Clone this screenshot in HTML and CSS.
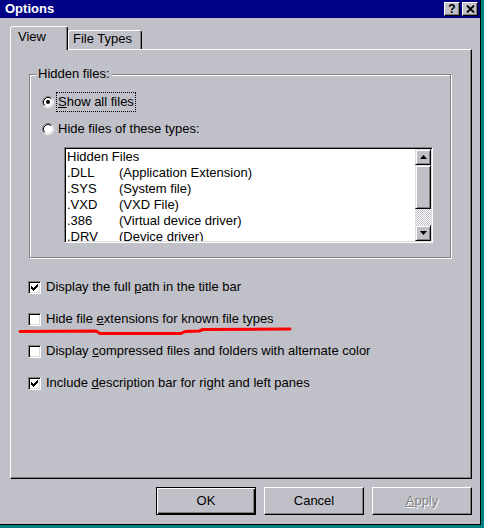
FILE: index.html
```html
<!DOCTYPE html>
<html>
<head>
<meta charset="utf-8">
<title>Options</title>
<link rel="stylesheet" href="styles.css">
</head>
<body>
<div class="window">
  <div class="titlebar">
    <span class="title">Options</span>
    <div class="tbtns">
      <span class="tbtn help">?</span>
      <span class="tbtn close"><svg width="9" height="8" viewBox="0 0 9 8"><path d="M1 0.5 L8 7.5 M8 0.5 L1 7.5" stroke="#000" stroke-width="1.8" fill="none"/></svg></span>
    </div>
  </div>

  <div class="tabs">
    <div class="tab active">View</div>
    <div class="tab">File Types</div>
  </div>

  <div class="panel">
    <div class="group">
      <div class="legend">Hidden files:</div>
      <div class="radio-row first">
        <svg class="radio" width="12" height="12" viewBox="0 0 12 12">
          <circle cx="6" cy="6" r="5" fill="#fff"/>
          <path d="M9.89 2.11 A5.5 5.5 0 0 0 2.11 9.89" stroke="#808080" fill="none"/>
          <path d="M9.89 2.11 A5.5 5.5 0 0 1 2.11 9.89" stroke="#fff" fill="none"/>
          <path d="M9.18 2.82 A4.5 4.5 0 0 0 2.82 9.18" stroke="#000" fill="none"/>
          <path d="M9.18 2.82 A4.5 4.5 0 0 1 2.82 9.18" stroke="#dcdcdc" fill="none"/>
          <circle cx="6" cy="6" r="2" fill="#000"/>
        </svg>
        <span class="rlabel focus"><u>S</u>how all files</span>
      </div>
      <div class="radio-row">
        <svg class="radio" width="12" height="12" viewBox="0 0 12 12">
          <circle cx="6" cy="6" r="5" fill="#fff"/>
          <path d="M9.89 2.11 A5.5 5.5 0 0 0 2.11 9.89" stroke="#808080" fill="none"/>
          <path d="M9.89 2.11 A5.5 5.5 0 0 1 2.11 9.89" stroke="#fff" fill="none"/>
          <path d="M9.18 2.82 A4.5 4.5 0 0 0 2.82 9.18" stroke="#000" fill="none"/>
          <path d="M9.18 2.82 A4.5 4.5 0 0 1 2.82 9.18" stroke="#dcdcdc" fill="none"/>
        </svg>
        <span class="rlabel">Hide files of these types:</span>
      </div>
      <div class="listbox">
        <div class="list">
          <div class="li">Hidden Files</div>
          <div class="li"><span class="ext">.DLL</span><span>(Application Extension)</span></div>
          <div class="li"><span class="ext">.SYS</span><span>(System file)</span></div>
          <div class="li"><span class="ext">.VXD</span><span>(VXD File)</span></div>
          <div class="li"><span class="ext">.386</span><span>(Virtual device driver)</span></div>
          <div class="li"><span class="ext">.DRV</span><span>(Device driver)</span></div>
        </div>
        <div class="scrollbar">
          <div class="sbtn"><svg width="7" height="4" viewBox="0 0 7 4"><polygon points="3.5,0 7,4 0,4" fill="#000"/></svg></div>
          <div class="thumb"></div>
          <div class="track"></div>
          <div class="sbtn"><svg width="7" height="4" viewBox="0 0 7 4"><polygon points="0,0 7,0 3.5,4" fill="#000"/></svg></div>
        </div>
      </div>
    </div>

    <div class="checks">
      <div class="check-row">
        <span class="cb"><svg width="7" height="7" viewBox="0 0 7 7" shape-rendering="crispEdges"><path d="M6 0h1v1h-1z M5 1h2v1h-2z M0 2h1v1h-1z M4 2h3v1h-3z M0 3h2v1h-2z M3 3h3v1h-3z M0 4h5v1h-5z M1 5h3v1h-3z M2 6h1v1h-1z" fill="#000"/></svg></span>
        <span>Display the full <u>p</u>ath in the title bar</span>
      </div>
      <div class="check-row">
        <span class="cb"></span>
        <span>Hide file <u>e</u>xtensions for known file types</span>
      </div>
      <div class="check-row">
        <span class="cb"></span>
        <span>Display <u>c</u>ompressed files and folders with alternate color</span>
      </div>
      <div class="check-row">
        <span class="cb"><svg width="7" height="7" viewBox="0 0 7 7" shape-rendering="crispEdges"><path d="M6 0h1v1h-1z M5 1h2v1h-2z M0 2h1v1h-1z M4 2h3v1h-3z M0 3h2v1h-2z M3 3h3v1h-3z M0 4h5v1h-5z M1 5h3v1h-3z M2 6h1v1h-1z" fill="#000"/></svg></span>
        <span>Include <u>d</u>escription bar for right and left panes</span>
      </div>
    </div>

    <svg class="redline" width="280" height="14" viewBox="0 0 280 14">
      <polyline points="4,7.5 80,7 84,9.5 165,9.5 169,7.5 183,7 187,5.5 274,5" stroke="#ff0000" stroke-width="3" fill="none" stroke-linecap="round" stroke-linejoin="round"/>
    </svg>
  </div>

  <div class="buttons">
    <div class="btn default">OK</div>
    <div class="btn">Cancel</div>
    <div class="btn disabled"><span><u>A</u>pply</span></div>
  </div>
</div>
</body>
</html>
```

FILE: styles.css
```css
* {
  box-sizing: border-box;
}

html, body {
  margin: 0;
  padding: 0;
}

body {
  width: 484px;
  height: 528px;
  overflow: hidden;
  background: #008080;
  font-family: "Liberation Sans", Arial, sans-serif;
  font-size: 13px;
  line-height: 16px;
  color: #000;
}

.window {
  width: 481px;
  height: 525px;
  background: #c0c0c8;
  border-right: 1px solid #000;
  border-bottom: 1px solid #000;
  display: flex;
  flex-direction: column;
}

/* Title bar */
.titlebar {
  height: 18px;
  background: #000084;
  display: flex;
  align-items: center;
  justify-content: space-between;
  padding: 0 2px 0 5px;
}

.title {
  color: #fff;
  font-weight: bold;
  line-height: 18px;
}

.tbtns {
  display: flex;
  gap: 2px;
}

.tbtn {
  width: 16px;
  height: 14px;
  background: #c0c0c8;
  border: 1px solid;
  border-color: #fff #000 #000 #fff;
  box-shadow: inset -1px -1px 0 #808080;
  display: flex;
  align-items: center;
  justify-content: center;
}

.help {
  font-weight: bold;
  font-size: 12px;
  line-height: 12px;
}

/* Tabs */
.tabs {
  margin-top: 8px;
  padding-left: 10px;
  height: 23px;
  display: flex;
  align-items: flex-end;
}

.tab {
  background: #c0c0c8;
  border: 1px solid;
  border-bottom: 0;
  border-color: #fff #000 transparent #fff;
  border-radius: 3px 3px 0 0;
  box-shadow: inset -1px 0 0 #808080;
  height: 19px;
  width: 74px;
  padding: 0 0 0 4px;
}

.tab.active {
  height: 24px;
  width: 58px;
  margin-bottom: -1px;
  padding: 2px 0 0 7px;
  position: relative;
  z-index: 1;
}

/* Panel */
.panel {
  margin-left: 10px;
  width: 462px;
  height: 430px;
  border: 1px solid;
  border-color: #fff #000 #000 #fff;
  box-shadow: inset -1px -1px 0 #808080;
  padding: 24px 0 0 17px;
  position: relative;
}

.group {
  margin-left: 1px;
  width: 422px;
  height: 184px;
  border: 1px solid #808080;
  box-shadow: inset 1px 1px 0 #fff, 1px 1px 0 #fff;
  display: flex;
  flex-direction: column;
  align-items: flex-start;
}

.legend {
  margin: -9px 0 0 6px;
  padding: 0 2px;
  background: #c0c0c8;
}

.radio-row {
  margin-left: 12px;
  margin-top: 7px;
  height: 20px;
  display: flex;
  align-items: center;
  gap: 2px;
}

.radio-row.first {
  margin-top: 10px;
}

.rlabel {
  border: 1px dotted transparent;
  padding: 1px;
}

.rlabel.focus {
  border-color: #000;
}

/* Listbox */
.listbox {
  margin: 8px 0 0 34px;
  width: 369px;
  height: 96px;
  border: 1px solid;
  border-color: #808080 #fff #fff #808080;
  box-shadow: inset 1px 1px 0 #000, inset -1px -1px 0 #dcdcdc;
  padding: 1px;
  display: flex;
}

.list {
  flex: 1;
  background: #fff;
  overflow: hidden;
  padding-left: 1px;
}

.li {
  height: 16px;
  white-space: nowrap;
  display: flex;
}

.ext {
  width: 52px;
}

.scrollbar {
  width: 16px;
  display: flex;
  flex-direction: column;
}

.sbtn,
.thumb {
  background: #c0c0c8;
  border: 1px solid;
  border-color: #dcdcdc #000 #000 #dcdcdc;
  box-shadow: inset 1px 1px 0 #fff, inset -1px -1px 0 #808080;
}

.sbtn {
  height: 16px;
  display: flex;
  align-items: center;
  justify-content: center;
}

.thumb {
  height: 44px;
}

.track {
  height: 16px;
  background: repeating-conic-gradient(#ffffff 0 25%, #c0c0c8 0 50%) 0 0 / 2px 2px;
}

/* Checkboxes */
.checks {
  margin-top: 21px;
  display: flex;
  flex-direction: column;
  gap: 16px;
}

.check-row {
  height: 16px;
  display: flex;
  align-items: center;
  gap: 5px;
  white-space: nowrap;
}

.cb {
  width: 13px;
  height: 13px;
  flex: none;
  background: #fff;
  border: 1px solid;
  border-color: #808080 #fff #fff #808080;
  box-shadow: inset 1px 1px 0 #000, inset -1px -1px 0 #dcdcdc;
  display: flex;
  align-items: center;
  justify-content: center;
}

.redline {
  position: absolute;
  left: 5px;
  top: 274px;
}

/* Buttons */
.buttons {
  margin: 8px 0 0 10px;
  width: 462px;
  display: flex;
  justify-content: flex-end;
  gap: 8px;
}

.btn {
  width: 100px;
  height: 28px;
  border: 1px solid;
  border-color: #fff #000 #000 #fff;
  box-shadow: inset -1px -1px 0 #808080;
  display: flex;
  align-items: center;
  justify-content: center;
}

.btn.default {
  border-color: #000;
  box-shadow: inset 1px 1px 0 #fff, inset -1px -1px 0 #000, inset -2px -2px 0 #808080;
}

.btn.disabled {
  color: #808080;
  text-shadow: 1px 1px 0 #fff;
}
```
